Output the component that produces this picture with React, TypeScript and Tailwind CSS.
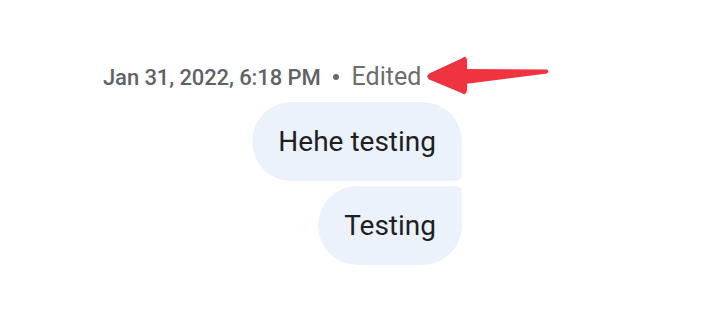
import React from "react";

function RedArrow() {
  return (
    <svg width="130" height="44" viewBox="0 0 130 44" className="absolute left-[424px] top-[54px]">
      <path d="M41 15 L123 15.5 Q125.5 17 123 19.5 L41 30 Z" fill="#ef3340" />
      <path d="M39 5 Q41 2 42 6 L42 36 Q41 41 38 38 L5.5 24.5 Q3 22 5.5 20.5 Z" fill="#ef3340" stroke="#ef3340" strokeWidth="2" strokeLinejoin="round" />
    </svg>
  );
}

export default function App() {
  return (
    <div className="relative w-[718px] h-[316px] bg-white font-['Roboto',sans-serif] overflow-hidden">
      <div className="flex flex-col w-[359px] ml-[103px] pt-[61px]">
        <div className="flex items-center h-[32px] text-[#5f6368]">
          <span className="text-[22px] font-medium tracking-[-0.1px]">Jan 31, 2022, 6:18 PM</span>
          <span className="w-[6px] h-[6px] rounded-full bg-[#6a6a6a] ml-[12px] mr-[13px]" />
          <span className="text-[25px] text-[#6d6d6d]">Edited</span>
        </div>
        <div className="flex flex-col items-end gap-[5px] mt-[9px]">
          <div className="h-[79px] flex items-center px-[26px] bg-[#ecf2fc] rounded-[40px] rounded-br-[6px] text-[28px] text-[#1f1f1f]">
            Hehe testing
          </div>
          <div className="h-[79px] flex items-center px-[26px] bg-[#ecf2fc] rounded-[40px] rounded-tr-[6px] text-[28px] text-[#1f1f1f]">
            Testing
          </div>
        </div>
      </div>
      <RedArrow />
    </div>
  );
}
